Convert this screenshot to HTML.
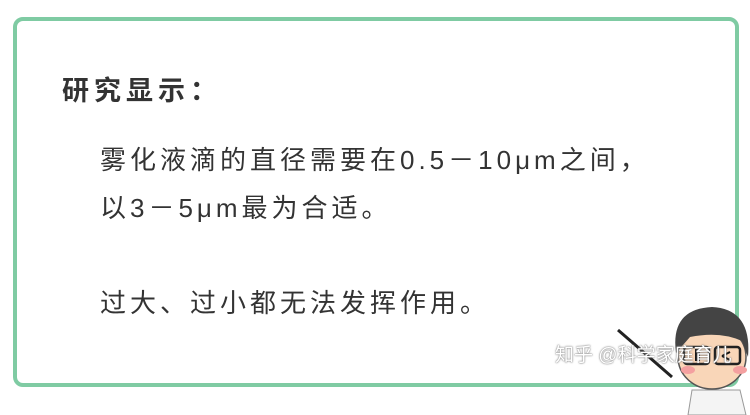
<!DOCTYPE html>
<html><head><meta charset="utf-8"><style>
body{margin:0;width:750px;height:415px;background:#fff;position:relative;overflow:hidden;font-family:"Liberation Sans","Noto Sans CJK SC",sans-serif;color:#333}
.box{position:absolute;left:13px;top:17px;width:718px;height:362px;border:4px solid #7fcba3;border-radius:10px;background:#fff}
.t{position:absolute;white-space:nowrap}
.wm{position:absolute;left:555px;top:340px;font-size:19px;color:#fff;text-shadow:0 0 2px #888,0 0 1px #666;white-space:nowrap}
</style></head><body>
<div class="box"></div>
<div class="t" style="left:62px;top:69px;font-size:27px;font-weight:bold;letter-spacing:5px;color:#333">研究显示：</div>
<div class="t" style="left:100px;top:140px;font-size:26px;letter-spacing:4px">雾化液滴的直径需要在0.5－10μm之间，</div>
<div class="t" style="left:100px;top:188px;font-size:26px;letter-spacing:4px">以3－5μm最为合适。</div>
<div class="t" style="left:100px;top:283px;font-size:26px;letter-spacing:4px">过大、过小都无法发挥作用。</div>
<svg style="position:absolute;left:600px;top:295px" width="150" height="120" viewBox="0 0 150 120">
<line x1="18" y1="35" x2="72" y2="82" stroke="#222" stroke-width="3"/>
<path d="M88 120 L92 95 L140 95 L146 120Z" fill="#f4f4f4" stroke="#999"/>
<ellipse cx="112" cy="62" rx="34" ry="32" fill="#f9d6b8" stroke="#555" stroke-width="1.5"/>
<path d="M76 58 Q70 14 112 12 Q152 14 148 62 L142 46 Q120 36 90 42 Z" fill="#444"/>
<rect x="84" y="52" width="25" height="17" rx="3" fill="none" stroke="#222" stroke-width="2.5"/>
<rect x="115" y="52" width="25" height="17" rx="3" fill="none" stroke="#222" stroke-width="2.5"/>
<ellipse cx="88" cy="75" rx="7" ry="4" fill="#f4a0a0"/>
<ellipse cx="140" cy="75" rx="7" ry="4" fill="#f4a0a0"/>
<rect x="95" y="54" width="5" height="12" fill="#111"/>
<path d="M122 61 L130 57 M122 61 L130 65" stroke="#111" stroke-width="2"/>
</svg>
<div class="wm">知乎 @科学家庭育儿</div>
</body></html>
